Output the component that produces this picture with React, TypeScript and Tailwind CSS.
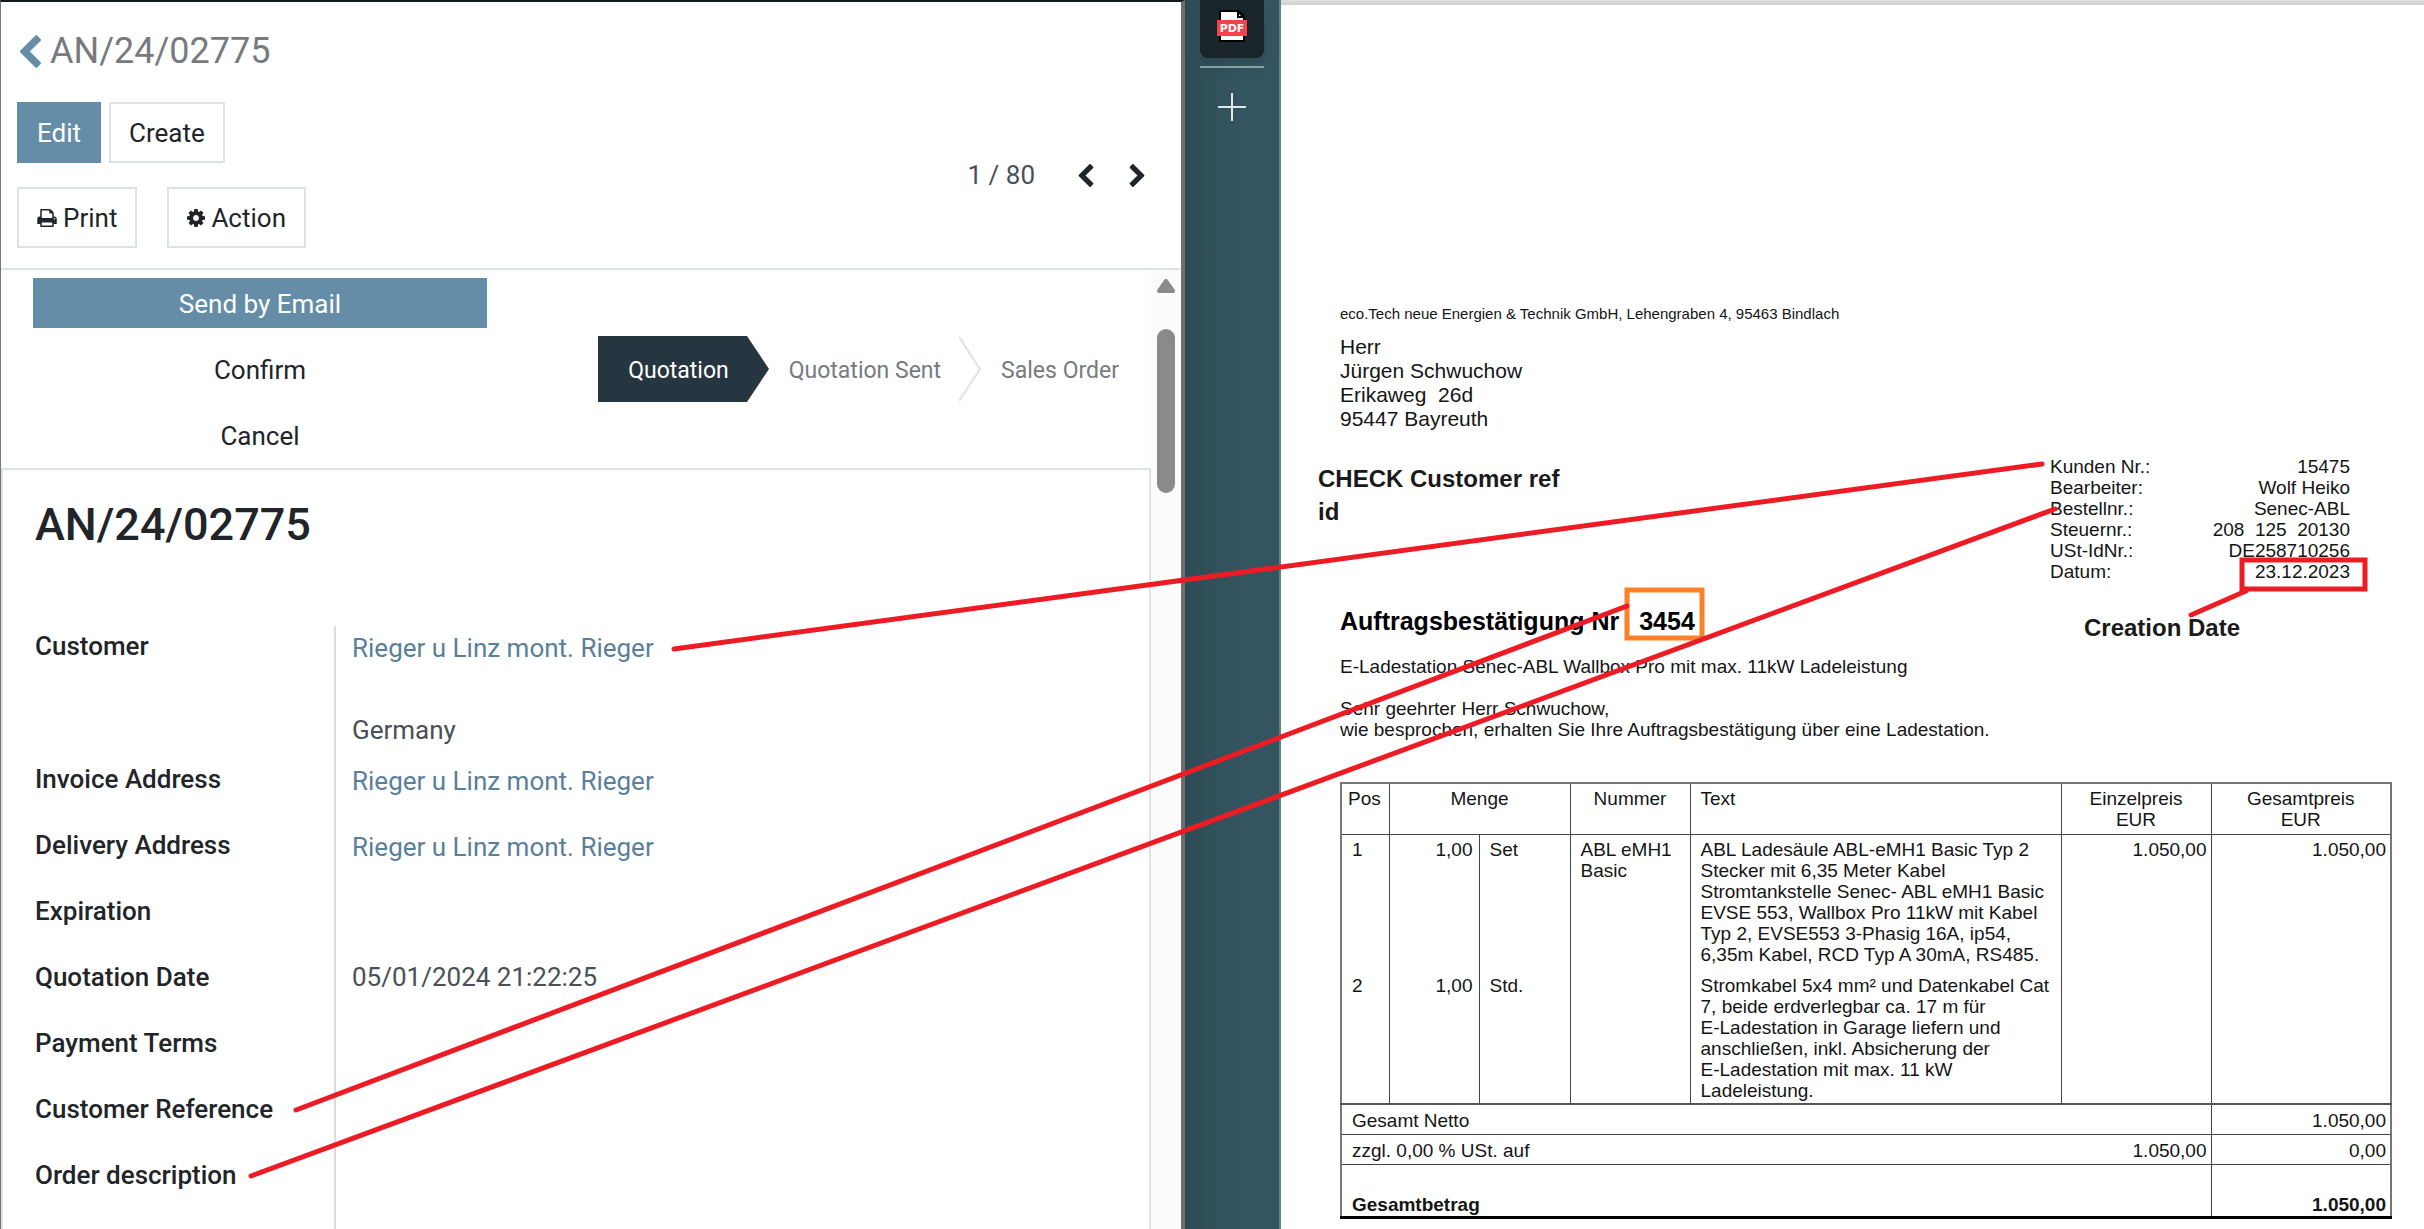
import React from "react";

const CHEVRON_LEFT =
  "M1427 301l-531 531 531 531q19 19 19 45t-19 45l-166 166q-19 19-45 19t-45-19l-742-742q-19-19-19-45t19-45l742-742q19-19 45-19t45 19l166 166q19 19 19 45t-19 45z";
const CHEVRON_RIGHT =
  "M1363 877l-742 742q-19 19-45 19t-45-19l-166-166q-19-19-19-45t19-45l531-531-531-531q-19-19-19-45t19-45l166-166q19-19 45-19t45 19l742 742q19 19 19 45t-19 45z";
const PRINTER =
  "M448 1536h896v-256h-896v256zm0-640h896v-384h-160q-40 0-68-28t-28-68v-160h-640v640zm1152 64q0-26-19-45t-45-19-45 19-19 45 19 45 45 19 45-19 19-45zm128 0v416q0 13-9.5 22.5t-22.5 9.5h-224v160q0 40-28 68t-68 28h-960q-40 0-68-28t-28-68v-160h-224q-13 0-22.5-9.5t-9.5-22.5v-416q0-79 56.5-135.5t135.5-56.5h64v-544q0-40 28-68t68-28h672q40 0 88 20t76 48l152 152q28 28 48 76t20 88v256h64q79 0 135.5 56.5t56.5 135.5z";
const COG =
  "M1152 896q0-106-75-181t-181-75-181 75-75 181 75 181 181 75 181-75 75-181zm512-109v222q0 12-8 23t-20 13l-185 28q-19 54-39 91 35 50 107 138 10 12 10 25t-9 23q-27 37-99 108t-94 71q-12 0-26-9l-138-108q-44 23-91 38-16 136-29 186-7 28-36 28h-222q-14 0-24.5-8.5t-11.5-21.5l-28-184q-49-16-90-37l-141 107q-10 9-25 9-14 0-25-11-126-114-165-168-7-10-7-23 0-12 8-23 15-21 51-66.5t54-70.5q-27-50-41-99l-183-27q-13-2-21-12.5t-8-23.5v-222q0-12 8-23t19-13l186-28q14-46 39-92-40-57-107-138-10-12-10-24 0-10 9-23 26-36 98.5-107.5t94.5-71.5q13 0 26 10l138 107q44-23 91-38 16-136 29-186 7-28 36-28h222q14 0 24.5 8.5t11.5 21.5l28 184q49 16 90 37l142-107q9-9 24-9 13 0 25 10 129 119 165 170 7 8 7 22 0 12-8 23-15 21-51 66.5t-54 70.5q26 50 41 98l183 28q13 2 21 12.5t8 23.5z";

function Header() {
  const outline =
    "flex h-[61px] items-center gap-1.5 border-2 border-[#dee2e6] px-[18px] text-[#212529]";
  return (
    <header className="border-b-2 border-[#dee2e6] pt-[27px] pr-9 pb-5 pl-4">
      <h2 className="flex h-11 items-center gap-[9px] pl-[3px] text-[36px] text-[#777b7f]">
        <a href="#back" aria-label="Back">
          <svg viewBox="410 26 1036 1612" className="h-[33px] w-[21px] fill-[#658da8]">
            <path d={CHEVRON_LEFT} />
          </svg>
        </a>
        AN/24/02775
      </h2>
      <div className="mt-[29px] flex items-center justify-between">
        <div className="flex flex-col gap-6">
          <div className="flex gap-2">
            <button className="h-[61px] bg-[#658da8] px-5 text-white">Edit</button>
            <button className={outline}>Create</button>
          </div>
          <div className="flex gap-[30px]">
            <button className={outline}>
              <svg viewBox="64 128 1664 1536" className="h-[18px] w-5 fill-current">
                <path d={PRINTER} />
              </svg>
              Print
            </button>
            <button className={outline}>
              <svg viewBox="128 128 1536 1536" className="size-[18px] fill-current">
                <path d={COG} />
              </svg>
              Action
            </button>
          </div>
        </div>
        <nav className="flex items-center text-[#495057]">
          <span>1 / 80</span>
          <button aria-label="Previous" className="ml-[43px]">
            <svg viewBox="410 26 1036 1612" className="h-[23px] w-4 fill-[#212529]">
              <path d={CHEVRON_LEFT} />
            </svg>
          </button>
          <button aria-label="Next" className="ml-[35px]">
            <svg viewBox="346 26 1036 1612" className="h-[23px] w-4 fill-[#212529]">
              <path d={CHEVRON_RIGHT} />
            </svg>
          </button>
        </nav>
      </div>
    </header>
  );
}

function StatusBar() {
  const action = "h-[50px] pt-0.5";
  return (
    <div className="flex items-center justify-between px-8 py-2">
      <div className="flex w-[454px] flex-col gap-4 text-[#212529]">
        <button className={`${action} bg-[#658da8] text-white`}>Send by Email</button>
        <button className={action}>Confirm</button>
        <button className={action}>Cancel</button>
      </div>
      <ol className="flex h-[66px] items-center text-[23px] text-[#777b7f]">
        <li className="flex h-full items-center">
          <span className="flex h-full items-center bg-[#263640] pt-1 pr-[18px] pl-[30px] text-white">
            Quotation
          </span>
          <svg viewBox="0 0 22 66" className="h-full w-[22px] fill-[#263640]">
            <path d="M0 0L22 33L0 66z" />
          </svg>
        </li>
        <li className="flex h-full items-center pl-5">
          <span className="pt-1 pr-[18px]">Quotation Sent</span>
          <svg viewBox="0 0 22 66" className="h-full w-[22px] fill-none stroke-[#dee2e6]" strokeWidth="2">
            <path d="M0 1L21 33L0 65" />
          </svg>
        </li>
        <li className="pt-1 pl-5">Sales Order</li>
      </ol>
    </div>
  );
}

const LABEL = "w-[333px] shrink-0 border-r-2 border-[#dcdcdc] pl-8 font-medium text-[#212529]";
const LINK = "block pt-0.5 text-[#5a7f9a]";

function Field({ label, children }: { label: string; children?: React.ReactNode }) {
  return (
    <div className="flex h-[66px]">
      <dt className={`${LABEL} leading-[66px]`}>{label}</dt>
      <dd className="pl-4 leading-[66px]">{children}</dd>
    </div>
  );
}

function Sheet() {
  return (
    <section className="flex flex-1 flex-col border-2 border-b-0 border-[#dee2e6]">
      <h1 className="px-8 pt-[27px] text-[45px] leading-[56px] font-medium text-[#212529]">
        AN/24/02775
      </h1>
      <dl className="mt-[73px] flex flex-1 flex-col text-[#495057]">
        <div className="flex h-[120px]">
          <dt className={`${LABEL} pt-1 leading-8`}>Customer</dt>
          <dd className="flex flex-col gap-[50px] pt-1 pl-4 leading-8">
            <a href="#customer" className={LINK}>Rieger u Linz mont. Rieger</a>
            <span>Germany</span>
          </dd>
        </div>
        <Field label="Invoice Address">
          <a href="#invoice" className={LINK}>Rieger u Linz mont. Rieger</a>
        </Field>
        <Field label="Delivery Address">
          <a href="#delivery" className={LINK}>Rieger u Linz mont. Rieger</a>
        </Field>
        <Field label="Expiration" />
        <Field label="Quotation Date">05/01/2024 21:22:25</Field>
        <Field label="Payment Terms" />
        <Field label="Customer Reference" />
        <Field label="Order description" />
        <div className="w-[333px] flex-1 border-r-2 border-[#dcdcdc]" />
      </dl>
    </section>
  );
}

function Scrollbar() {
  return (
    <div className="flex w-[30px] flex-col items-center bg-[#fbfbfb] pt-[9px]">
      <svg viewBox="0 0 18 14" className="h-3.5 w-[18px] fill-[#8a8a8a] stroke-[#8a8a8a]" strokeWidth="4" strokeLinejoin="round">
        <path d="M9 2L16 12H2z" />
      </svg>
      <div className="mt-9 h-[164px] w-[18px] rounded-full bg-[#8a8a8a]" />
    </div>
  );
}

function Sidebar() {
  return (
    <aside className="flex flex-col items-center border-r-2 border-[#5f808a] bg-linear-to-r from-[#2f4c56] to-[#33555f] to-60%">
      <button aria-label="PDF document" className="flex h-[58px] w-16 justify-center rounded-b-lg bg-[#1a2529] pt-2.5 shadow-lg">
        <svg viewBox="0 0 30 32" className="h-8 w-[30px]">
          <path d="M2 0H22L28 6V32H2z" fill="#000" />
          <path d="M4 2H20V8H26V30H4z" fill="#fff" />
          <path d="M22 4L24 6H22z" fill="#fff" />
          <rect x="0" y="10" width="30" height="16" fill="#f54149" />
          <text x="15" y="22" textAnchor="middle" fontSize="11" fontWeight="700" fontFamily="DejaVu Sans, sans-serif" fill="#fff">
            PDF
          </text>
        </svg>
      </button>
      <div className="mt-2 h-0.5 w-16 bg-[#8a9da4]" />
      <button aria-label="Add" className="mt-[25px]">
        <svg viewBox="0 0 28 28" className="size-7 stroke-[#e3e6e8]" strokeWidth="2">
          <path d="M14 0V28M0 14H28" />
        </svg>
      </button>
    </aside>
  );
}

const META = [
  ["Kunden Nr.:", "15475"],
  ["Bearbeiter:", "Wolf Heiko"],
  ["Bestellnr.:", "Senec-ABL"],
  ["Steuernr.:", "208  125  20130"],
  ["USt-IdNr.:", "DE258710256"],
  ["Datum:", "23.12.2023"],
];

const NOTE = "text-[24px] leading-[33px] font-bold text-[#1a1a1a]";

function Items() {
  const th = "border-x border-[#444] pt-1 font-normal";
  const v = "border-x border-[#444] align-top";
  return (
    <table className="mt-[42px] w-full table-fixed border-collapse border-2 border-b-[3px] border-[#777] border-b-black text-left">
      <colgroup>
        <col className="w-12" />
        <col className="w-[90px]" />
        <col className="w-[91px]" />
        <col className="w-[120px]" />
        <col />
        <col className="w-[150px]" />
        <col className="w-[180px]" />
      </colgroup>
      <thead>
        <tr className="h-[51px] border-b border-[#444] align-top">
          <th className={`${th} px-1.5`}>Pos</th>
          <th colSpan={2} className={`${th} text-center`}>Menge</th>
          <th className={`${th} text-center`}>Nummer</th>
          <th className={`${th} px-2.5`}>Text</th>
          <th className={`${th} text-center`}>Einzelpreis<br />EUR</th>
          <th className={`${th} text-center`}>Gesamtpreis<br />EUR</th>
        </tr>
      </thead>
      <tbody>
        <tr className="h-[135px]">
          <td className={`${v} px-2.5 pt-1`}>1</td>
          <td className={`${v} px-1.5 pt-1 text-right`}>1,00</td>
          <td className={`${v} px-2.5 pt-1`}>Set</td>
          <td className={`${v} px-2.5 pt-1`}>ABL eMH1<br />Basic</td>
          <td className={`${v} pt-1 pl-2.5 whitespace-nowrap`}>
            ABL Ladesäule ABL-eMH1 Basic Typ 2<br />
            Stecker mit 6,35 Meter Kabel<br />
            Stromtankstelle Senec- ABL eMH1 Basic<br />
            EVSE 553, Wallbox Pro 11kW mit Kabel<br />
            Typ 2, EVSE553 3-Phasig 16A, ip54,<br />
            6,35m Kabel, RCD Typ A 30mA, RS485.
          </td>
          <td className={`${v} px-1 pt-1 text-right`}>1.050,00</td>
          <td className={`${v} px-1 pt-1 text-right`}>1.050,00</td>
        </tr>
        <tr className="h-[135px]">
          <td className={`${v} px-2.5 pt-1.5`}>2</td>
          <td className={`${v} px-1.5 pt-1.5 text-right`}>1,00</td>
          <td className={`${v} px-2.5 pt-1.5`}>Std.</td>
          <td className={v} />
          <td className={`${v} pt-1.5 pl-2.5 whitespace-nowrap`}>
            Stromkabel 5x4 mm² und Datenkabel Cat<br />
            7, beide erdverlegbar ca. 17 m für<br />
            E-Ladestation in Garage liefern und<br />
            anschließen, inkl. Absicherung der<br />
            E-Ladestation mit max. 11 kW<br />
            Ladeleistung.
          </td>
          <td className={v} />
          <td className={v} />
        </tr>
      </tbody>
      <tfoot>
        <tr className="h-[30px] border-t-2 border-[#555]">
          <td colSpan={6} className="px-2.5 pt-0.5">Gesamt Netto</td>
          <td className="border-l border-[#444] px-1 pt-0.5 text-right">1.050,00</td>
        </tr>
        <tr className="h-[30px] border-y border-[#444]">
          <td colSpan={5} className="px-2.5 pt-0.5">zzgl. 0,00 % USt. auf</td>
          <td className="px-1 pt-0.5 text-right">1.050,00</td>
          <td className="border-l border-[#444] px-1 pt-0.5 text-right">0,00</td>
        </tr>
        <tr className="h-[53px] align-bottom font-bold">
          <td colSpan={6} className="px-2.5 pb-px">Gesamtbetrag</td>
          <td className="border-l border-[#444] px-1 pb-px text-right">1.050,00</td>
        </tr>
      </tfoot>
    </table>
  );
}

function Document() {
  return (
    <main className="min-w-0 font-['Liberation_Sans',Arial,sans-serif] text-[19px] leading-[21px] text-[#151515]">
      <div className="h-[5px] bg-linear-to-b from-[#e0e0e0] to-[#cfcfcf]" />
      <div className="pt-[299px] pr-8 pl-[59px]">
        <p className="text-[15px] leading-5">
          eco.Tech neue Energien &amp; Technik GmbH, Lehengraben 4, 95463 Bindlach
        </p>
        <address className="mt-[11px] text-[21px] leading-6 whitespace-pre not-italic">
          Herr<br />
          Jürgen Schwuchow<br />
          {"Erikaweg  26d"}<br />
          95447 Bayreuth
        </address>
      </div>
      <div className="mt-[25px] flex justify-between pr-[74px] pl-[37px]">
        <p className={`${NOTE} w-[250px] pt-1.5`}>CHECK Customer ref id</p>
        <dl className="w-[300px]">
          {META.map(([k, val]) => (
            <div key={k} className="flex justify-between whitespace-pre">
              <dt>{k}</dt>
              <dd>{val}</dd>
            </div>
          ))}
        </dl>
      </div>
      <div className="mt-[23px] flex justify-between pr-[74px] pl-[59px]">
        <h2 className="flex gap-5 text-[25px] leading-8 font-bold text-black">
          <span>Auftragsbestätigung Nr</span>
          <span>3454</span>
        </h2>
        <p className={`${NOTE} w-[300px] pt-1.5 pl-[34px]`}>Creation Date</p>
      </div>
      <div className="mt-3 pr-8 pl-[59px]">
        <p>E-Ladestation Senec-ABL Wallbox Pro mit max. 11kW Ladeleistung</p>
        <p className="mt-[21px]">
          Sehr geehrter Herr Schwuchow,<br />
          wie besprochen, erhalten Sie Ihre Auftragsbestätigung über eine Ladestation.
        </p>
        <Items />
      </div>
    </main>
  );
}

// Hand-drawn connectors between order fields and the places they come from.
function Annotations() {
  return (
    <svg
      viewBox="0 0 2424 1229"
      preserveAspectRatio="none"
      className="pointer-events-none absolute inset-0 h-full w-full fill-none stroke-[#ed1c24]"
      strokeWidth="5"
      strokeLinecap="round"
    >
      <rect x="1627" y="590" width="75" height="48" className="stroke-[#ff7f27]" />
      <rect x="2242" y="560" width="123" height="29" />
      <path d="M674 649L2042 464M296 1110L1627 606M251 1176L2055 509M2191 615L2246 591" />
    </svg>
  );
}

export default function App() {
  return (
    <div className="relative grid min-h-screen grid-cols-[1185fr_96px_1143fr] overflow-hidden bg-white">
      <div className="flex min-w-0 flex-col border-t-2 border-r-4 border-l border-t-[#121b20] border-r-[#6e6e6e] border-l-[#777] font-['Roboto',sans-serif] text-[26px] leading-8">
        <Header />
        <div className="flex flex-1">
          <div className="flex flex-1 flex-col">
            <StatusBar />
            <Sheet />
          </div>
          <Scrollbar />
        </div>
      </div>
      <Sidebar />
      <Document />
      <Annotations />
    </div>
  );
}
